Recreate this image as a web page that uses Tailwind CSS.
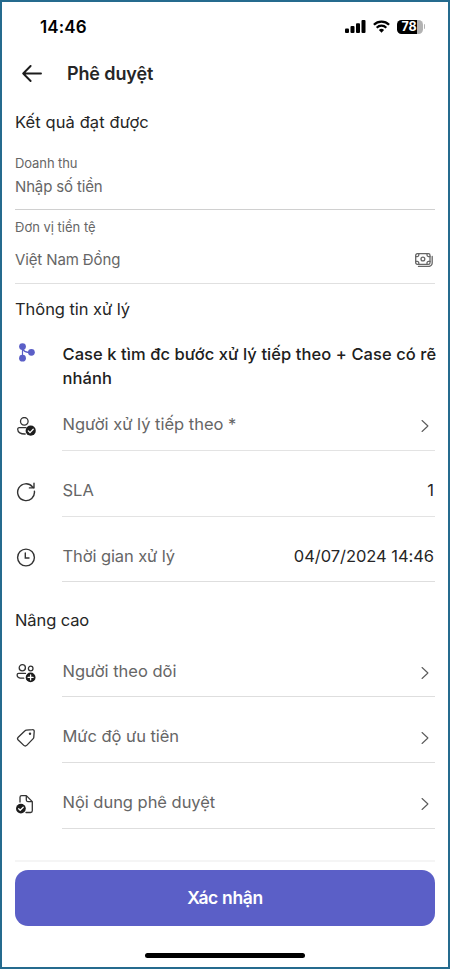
<!DOCTYPE html>
<html lang="vi">
<head>
<meta charset="utf-8">
<meta name="viewport" content="width=device-width, initial-scale=1">
<title>Phê duyệt</title>
<script src="https://cdn.jsdelivr.net/npm/@tailwindcss/browser@4"></script>
</head>
<body class="bg-white">
<div class="flex h-[969px] w-[450px] flex-col overflow-hidden border-2 border-[#256b8e] bg-white px-[13px] font-['Inter','Noto_Sans',sans-serif] text-[#262626]">
  <header>
    <div class="flex h-[49px] items-center justify-between pr-[10px] pl-[25px]">
      <span class="text-[17px] leading-6 font-semibold tracking-[0.1px] text-black">14:46</span>
      <div class="flex items-center">
        <svg class="mr-[7px] h-[13px] w-[21px]" viewBox="0 0 21 13"><rect x="0" y="8.5" width="4" height="4.5" rx="1"/><rect x="5.5" y="6" width="4" height="7" rx="1"/><rect x="11" y="3.2" width="4" height="9.8" rx="1"/><rect x="16.5" y="0" width="4" height="13" rx="1"/></svg>
        <svg class="mr-[7px] h-[13px] w-[17px]" viewBox="0 0 17 13" fill="none" stroke="#000"><path d="M.9 4.7a10.8 10.8 0 0 1 15.2 0" stroke-width="2.3"/><path d="M3.7 7.7a6.8 6.8 0 0 1 9.6 0" stroke-width="2.2"/><path d="M8.5 12.8 5.9 10a3.8 3.8 0 0 1 5.2 0Z" fill="#000" stroke="none"/></svg>
        <div class="flex h-[14px] w-[26px] items-center justify-center rounded-[4.5px] bg-[linear-gradient(90deg,#000_78%,#b3b3b3_78%)] text-[12.5px] leading-none font-bold tracking-[-0.2px] text-white"><span class="mr-[1px] pt-[1px]">78</span></div>
        <div class="ml-px h-[5px] w-[1.5px] rounded-r-full bg-[#b3b3b3]"></div>
      </div>
    </div>
    <div class="flex h-[46px] items-center pl-[7px]">
      <svg class="mr-[25px] h-[18px] w-[20px]" viewBox="0 0 20 18" fill="none" stroke="#1c1c1c" stroke-width="1.9" stroke-linecap="round" stroke-linejoin="round"><path d="M19 8.500H1.200M8.600 1 1.200 8.500l7.400 7.500"/></svg>
      <h1 class="text-[18px] leading-6 font-semibold tracking-[-0.13px]">Phê duyệt</h1>
    </div>
  </header>

  <section>
    <h2 class="flex h-[50px] items-center text-[16.5px] leading-6 tracking-[0.1px]">Kết quả đạt được</h2>
    <div class="h-[63px] border-b-[1.5px] border-[#d0d0d0] pt-[7px] text-[#666]">
      <div class="text-[13px] leading-[18px] tracking-[-0.1px]">Doanh thu</div>
      <div class="pt-[4px] text-[15px] leading-[22px] tracking-[-0.15px]">Nhập số tiền</div>
    </div>
    <div class="h-[74px] border-b border-[#e0e0e0] pt-[8px] text-[#666]">
      <div class="text-[13px] leading-[18px]">Đơn vị tiền tệ</div>
      <div class="flex items-center justify-between pt-[13px] pr-[2px] text-[15px] leading-[22px] tracking-[-0.12px]"><span>Việt Nam Đồng</span>
        <svg class="mb-[1px] h-[14px] w-[18px]" viewBox="0 0 18 14" fill="none" stroke="#666" stroke-width="1.3" stroke-linecap="round"><rect x=".7" y=".7" width="14.3" height="10.6" rx="1.6"/><circle cx="7.9" cy="6" r="1.9"/><path d="M3.8.9v1.2a1.5 1.5 0 0 1-1.5 1.5H.8M12 .9v1.2a1.5 1.5 0 0 0 1.5 1.5H15M3.8 11.1V9.9a1.500 1.500 0 0 0-1.500-1.500H.8M12 11.100V9.900a1.500 1.500 0 0 1 1.500-1.500H15M17.200 3.400V10a3.400 3.400 0 0 1-3.400 3.400H3.500"/></svg>
      </div>
    </div>
  </section>

  <section>
    <h2 class="flex h-[51px] items-center pb-[2px] text-[16.5px] leading-6 tracking-[-0.05px]">Thông tin xử lý</h2>
    <div class="flex h-[49px] pt-[7px]">
      <div class="w-[47px] shrink-0 pt-[1px] pl-[4px]"><svg class="h-[19px] w-[16px]" viewBox="0 0 16 19" fill="#5b5fc7"><path d="M3.500 3.500v12M3.500 3.500c0 5 3 6 9 6" fill="none" stroke="#5b5fc7" stroke-width="1.200"/><circle cx="3.500" cy="3.600" r="3.400"/><circle cx="3.500" cy="15.200" r="3.400"/><circle cx="12.400" cy="9.300" r="3.400"/></svg></div>
      <p class="pl-[0.5px] text-[16.5px] leading-6 font-medium tracking-[0.075px] whitespace-nowrap text-[#202020]">Case k tìm đc bước xử lý tiếp theo + Case có rẽ<br>nhánh</p>
    </div>
    <div class="flex h-[67px]">
      <div class="w-[47px] shrink-0 pt-[33px] pl-[2px]"><svg class="h-[20px] w-[20px]" viewBox="0 0 20 20" fill="none" stroke="#333" stroke-width="1.300" stroke-linecap="round"><circle cx="7.300" cy="4.300" r="3.800"/><path d="M9 10.600H2.300C1.200 10.600.7 11.400.7 12.200c0 3.200 3 4.900 7.500 4.800"/><circle cx="13.700" cy="13.700" r="5.100" fill="#1d1d1d" stroke="none"/><path d="m11.300 13.900 1.700 1.700 3.200-3.300" stroke="#fff"/></svg></div>
      <div class="flex flex-1 items-center justify-between border-b-[1.5px] border-[#e3e3e3] pt-[15px] pl-[0.5px] text-[16.5px] text-[#666]"><span class="pb-[1px]">Người xử lý tiếp theo *</span><svg class="mt-[2px] mr-[6px] h-[14px] w-[8px]" viewBox="0 0 9 14" fill="none" stroke="#5a5a5a" stroke-width="1.200" stroke-linecap="round" stroke-linejoin="round"><path d="m1.200.8 6.600 6.200-6.600 6.200"/></svg></div>
    </div>
    <div class="flex h-[66px]">
      <div class="w-[47px] shrink-0 pt-[31px] pl-[1px]"><svg class="h-[20px] w-[20px]" viewBox="0 0 20 20" fill="none" stroke="#333" stroke-width="1.400" stroke-linecap="round" stroke-linejoin="round"><path d="M18.400 9.200a8.400 8.400 0 1 1-2-4.500l1.300 1.200M18 1.300v4.600h-4.600"/></svg></div>
      <div class="flex flex-1 items-center justify-between border-b-[1.5px] border-[#e3e3e3] pt-[14px] pl-[0.5px] text-[16.5px] text-[#666]"><span>SLA</span><span class="pr-[1px] text-[#262626]">1</span></div>
    </div>
    <div class="flex h-[65px]">
      <div class="w-[47px] shrink-0 pt-[31px] pl-[1px]"><svg class="h-[20px] w-[20px]" viewBox="0 0 20 20" fill="none" stroke="#333" stroke-width="1.400" stroke-linecap="round"><circle cx="10" cy="9.500" r="8.400"/><path d="M9.300 5v5H13"/></svg></div>
      <div class="flex flex-1 items-center justify-between border-b border-[#dedede] pt-[14px] pl-[0.5px] text-[16.5px] text-[#666]"><span class="tracking-[-0.1px]">Thời gian xử lý</span><span class="pr-[1px] tracking-[-0.05px] text-[#262626]">04/07/2024 14:46</span></div>
    </div>
  </section>

  <section>
    <h2 class="flex h-[50px] items-end text-[16.5px] leading-6 tracking-[-0.1px]">Nâng cao</h2>
    <div class="flex h-[65px]">
      <div class="w-[47px] shrink-0 pt-[31px] pl-[1px]"><svg class="h-[20px] w-[21px]" viewBox="0 0 21 20" fill="none" stroke="#333" stroke-width="1.300" stroke-linecap="round"><circle cx="6.300" cy="4.800" r="3.100"/><circle cx="14.700" cy="5.500" r="2.300"/><path d="M9.500 10.400H2.700c-1 0-1.600.6-1.600 1.500 0 2.200 2.200 3.300 5.500 3.300h1.100"/><circle cx="14.600" cy="14.400" r="4.900" fill="#1d1d1d" stroke="none"/><path d="M14.600 11.900v5M12.100 14.400h5" stroke="#fff"/></svg></div>
      <div class="flex flex-1 items-center justify-between border-b border-[#dedede] pt-[15px] pl-[0.5px] text-[16.5px] text-[#666]"><span class="pb-[1px]">Người theo dõi</span><svg class="mt-[2px] mr-[6px] h-[14px] w-[8px]" viewBox="0 0 9 14" fill="none" stroke="#5a5a5a" stroke-width="1.200" stroke-linecap="round" stroke-linejoin="round"><path d="m1.200.8 6.600 6.200-6.600 6.200"/></svg></div>
    </div>
    <div class="flex h-[66px]">
      <div class="w-[47px] shrink-0 pt-[31px] pl-[1px]"><svg class="h-[20px] w-[20px]" viewBox="0 0 20 20" fill="none" stroke="#333" stroke-width="1.300" stroke-linejoin="round"><path d="M10.300 2.100 16.400 1.600a1.600 1.600 0 0 1 1.800 1.700l-.4 6a2 2 0 0 1-.6 1.300l-6.500 6.800a2 2 0 0 1-2.900 0L2.200 12a2 2 0 0 1 0-2.800l6.800-6.500a2 2 0 0 1 1.300-.6Z"/><circle cx="14" cy="5.700" r="1.200" fill="#333" stroke="none"/></svg></div>
      <div class="flex flex-1 items-center justify-between border-b border-[#dedede] pt-[15px] pl-[0.5px] text-[16.5px] text-[#666]"><span class="pb-[1px] tracking-[-0.05px]">Mức độ ưu tiên</span><svg class="mt-[2px] mr-[6px] h-[14px] w-[8px]" viewBox="0 0 9 14" fill="none" stroke="#5a5a5a" stroke-width="1.200" stroke-linecap="round" stroke-linejoin="round"><path d="m1.200.8 6.600 6.200-6.600 6.200"/></svg></div>
    </div>
    <div class="flex h-[66px]">
      <div class="w-[47px] shrink-0 pt-[31px]"><svg class="h-[20px] w-[19px]" viewBox="0 0 19 20" fill="none" stroke="#333" stroke-width="1.300" stroke-linecap="round" stroke-linejoin="round"><path d="M5 8V3.300A1.700 1.700 0 0 1 6.700 1.600h4.600L17.300 7.600v9.200a1.700 1.700 0 0 1-1.700 1.700H11M11.300 1.600v4.500A1.500 1.500 0 0 0 12.800 7.600h4.500"/><circle cx="5.900" cy="14.600" r="4.900" fill="#1d1d1d" stroke="none"/><path d="m3.700 14.800 1.500 1.500 3-3.100" stroke="#fff"/></svg></div>
      <div class="flex flex-1 items-center justify-between border-b border-[#dedede] pt-[15px] pl-[0.5px] text-[16.5px] text-[#666]"><span class="pb-[1px] tracking-[-0.03px]">Nội dung phê duyệt</span><svg class="mt-[2px] mr-[6px] h-[14px] w-[8px]" viewBox="0 0 9 14" fill="none" stroke="#5a5a5a" stroke-width="1.200" stroke-linecap="round" stroke-linejoin="round"><path d="m1.200.8 6.600 6.200-6.600 6.200"/></svg></div>
    </div>
  </section>

  <footer class="mt-[31px] flex flex-col items-center border-t-2 border-[#f5f5f5] pt-[8px]">
    <button class="h-[56px] w-full rounded-[13px] bg-[#5b5fc7] text-[17.5px] font-semibold tracking-[-0.35px] text-white">Xác nhận</button>
    <div class="mt-[27px] h-[5px] w-[160px] rounded-full bg-black"></div>
  </footer>
</div>
</body>
</html>
